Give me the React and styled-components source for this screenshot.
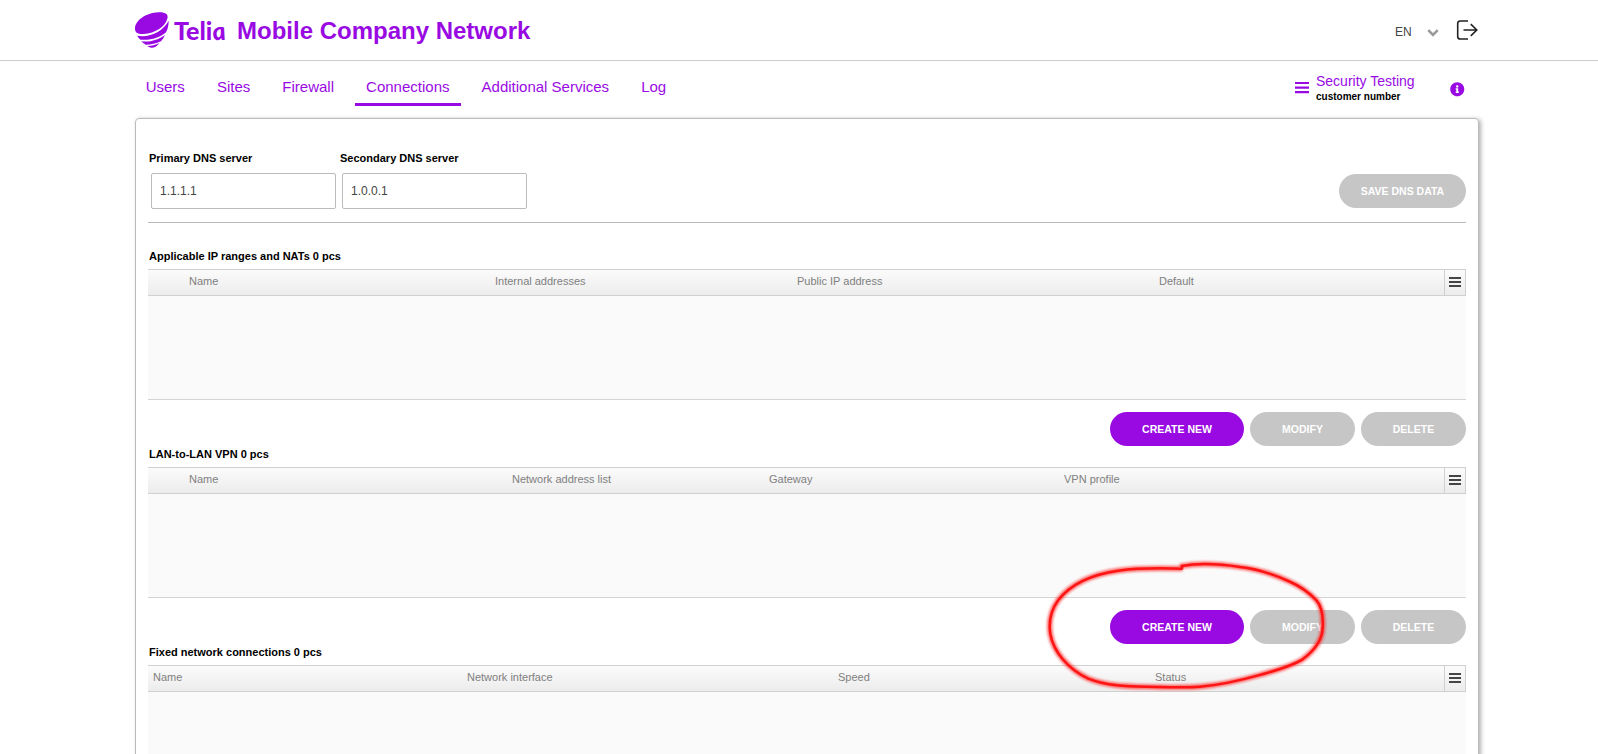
import React from "react";
import styled, { createGlobalStyle } from "styled-components";
import { FaInfoCircle } from "react-icons/fa";

const purple = "#990ae3";

const GlobalStyle = createGlobalStyle`
  *, *::before, *::after { box-sizing: border-box; }
  html, body { margin: 0; height: 100%; overflow: hidden; background: #fff; }
  body { font-family: "Liberation Sans", Arial, sans-serif; color: #000; }
`;

const Page = styled.div`
  position: relative;
  height: 754px;
  overflow: hidden;
  display: flex;
  flex-direction: column;
`;

const Header = styled.header`
  flex: none;
  height: 61px;
  padding: 0 120px 0 135px;
  border-bottom: 1px solid #ccc;
  display: flex;
  justify-content: space-between;
`;

const Brand = styled.div`
  display: flex;
  align-items: flex-start;
  color: ${purple};
`;

const Pebble = styled.svg`
  width: 34px;
  height: 36px;
  margin-top: 12px;
`;

const Wordmark = styled.span`
  margin: 14px 0 0 5px;
  width: 63px;
  font: 900 25px/32px Lato, sans-serif;
  white-space: nowrap;
`;

const RoundLetter = styled.span`
  display: inline-block;
  margin-left: -0.6px;
  font-style: italic;
  transform: skewX(10deg);
`;

const Title = styled.h1`
  margin: 15px 0 0;
  font-size: 24px;
  line-height: 32px;
  font-weight: bold;
`;

const Tools = styled.div`
  display: flex;
  align-items: flex-start;
`;

const Language = styled.span`
  margin-top: 24px;
  width: 32px;
  font-size: 12px;
  line-height: 16px;
  color: #444;
`;

const Chevron = styled.svg`
  width: 12px;
  height: 10px;
  margin: 28px 17px 0 0;
`;

const LogoutIcon = styled.svg`
  width: 22px;
  height: 22px;
  margin: 19px 0 0;
`;

const NavBar = styled.div`
  flex: none;
  height: 57px;
  padding: 12px 133.5px 0 134.5px;
  display: flex;
  justify-content: space-between;
  color: ${purple};
`;

const Tabs = styled.nav`
  display: flex;
  gap: 9.7px;
`;

const Tab = styled.a`
  height: 33px;
  padding: 4px 11.2px 0;
  font-size: 15px;
  line-height: 20px;
  border-bottom: 3px solid ${(p) => (p.$active ? purple : "transparent")};
`;

const Account = styled.div`
  display: flex;
  align-items: flex-start;
`;

const AccountMenu = styled.svg`
  width: 14px;
  height: 12px;
  margin: 9px 7px 0 0;
`;

const AccountText = styled.div`
  width: 134px;
  display: flex;
  flex-direction: column;
`;

const AccountName = styled.span`
  font-size: 14px;
  line-height: 16px;
  padding-bottom: 1px;
`;

const AccountSub = styled.span`
  font-size: 10px;
  line-height: 14px;
  font-weight: bold;
  color: #000;
`;

const InfoIcon = styled(FaInfoCircle)`
  width: 14.5px;
  height: 14.5px;
  margin-top: 9px;
`;

const Panel = styled.main`
  flex: none;
  width: 1344px;
  height: 700px;
  margin-left: 135px;
  padding: 0 12px;
  border: 1px solid #bbb;
  border-radius: 4px;
  box-shadow: 2px 1px 4px rgba(0, 0, 0, 0.3);
`;

const DnsForm = styled.form`
  height: 104px;
  padding-top: 30px;
  border-bottom: 1px solid #b9b9b9;
  display: flex;
  align-items: flex-start;
`;

const Field = styled.label`
  width: 191px;
  display: flex;
  flex-direction: column;
`;

const FieldLabel = styled.span`
  padding-left: 1px;
  font-size: 11px;
  line-height: 18px;
  font-weight: bold;
`;

const Input = styled.input`
  width: 185px;
  height: 36px;
  margin: 6px 0 0 3px;
  padding: 0 8px;
  border: 1px solid #bbb;
  border-radius: 2px;
  background: #fff;
  color: #444;
  font: 12px "Liberation Sans", Arial, sans-serif;
`;

const Button = styled.button`
  width: ${(p) => p.$width}px;
  height: 34px;
  padding: 0;
  border: 0;
  border-radius: 17px;
  background: ${(p) => (p.$primary ? purple : "#c6c6c6")};
  color: #fff;
  font: bold 10.5px "Liberation Sans", Arial, sans-serif;
`;

const SaveSlot = styled.div`
  margin: 25px 0 0 auto;
`;

const Section = styled.section`
  margin-top: ${(p) => (p.$first ? 25 : 0)}px;
`;

const SectionTitle = styled.h2`
  margin: 0;
  height: 21px;
  padding-left: 1px;
  font-size: 11px;
  line-height: 17px;
  font-weight: bold;
`;

const Table = styled.div`
  height: 131px;
  background: #fafafa;
  border-bottom: 1px solid #d4d4d4;
`;

const TableHead = styled.div`
  height: 27px;
  border: solid #d0d0d0;
  border-width: 1px 1px 1px 0;
  background: linear-gradient(#fbfbfb, #ececec);
  display: grid;
  grid-template-columns: ${(p) => p.$columns} 21px;
`;

const HeadCell = styled.span`
  font-size: 11px;
  line-height: 22px;
  color: #808080;
`;

const ColumnMenu = styled.span`
  grid-column: -2;
  border-left: 1px solid #d0d0d0;
  display: flex;
  flex-direction: column;
  align-items: center;
  padding-top: 7px;
  gap: 2px;
`;

const MenuBar = styled.i`
  width: 12px;
  height: 2px;
  background: #444;
`;

const Actions = styled.div`
  height: 46px;
  padding-top: 12px;
  display: flex;
  justify-content: flex-end;
  gap: 6px;
`;

const Marker = styled.svg`
  position: absolute;
  left: 1040px;
  top: 550px;
  width: 440px;
  height: 204px;
  pointer-events: none;
`;

const tabs = ["Users", "Sites", "Firewall", "Connections", "Additional Services", "Log"];

const sections = [
  {
    title: "Applicable IP ranges and NATs 0 pcs",
    grid: "41px 306px 302px 362px 1fr",
    editable: true,
    columns: ["Name", "Internal addresses", "Public IP address", "Default"],
  },
  {
    title: "LAN-to-LAN VPN 0 pcs",
    grid: "41px 323px 257px 295px 1fr",
    editable: true,
    columns: ["Name", "Network address list", "Gateway", "VPN profile"],
  },
  {
    title: "Fixed network connections 0 pcs",
    grid: "5px 314px 371px 317px 1fr",
    editable: false,
    columns: ["Name", "Network interface", "Speed", "Status"],
  },
];

const ringPath =
  "M428 56 C360 54 290 54 235 62 C150 74 90 105 55 150 C30 184 26 220 31 252 C40 305 85 358 145 386 C210 412 280 409 350 411 C400 412 440 413 480 410 C560 404 620 386 670 372 C720 358 760 345 788 328 C820 304 848 270 848 232 C850 200 845 170 830 152 C808 128 780 108 745 93 C700 73 650 56 600 51 C540 42 470 40 425 48 L428 56";

function ConnectionTable({ title, grid, columns, editable, first }) {
  return (
    <Section $first={first}>
      <SectionTitle>{title}</SectionTitle>
      <Table>
        <TableHead $columns={grid}>
          <span />
          {columns.map((c) => (
            <HeadCell key={c}>{c}</HeadCell>
          ))}
          <ColumnMenu>
            <MenuBar />
            <MenuBar />
            <MenuBar />
          </ColumnMenu>
        </TableHead>
      </Table>
      {editable && (
        <Actions>
          <Button $primary $width={134}>CREATE NEW</Button>
          <Button $width={105}>MODIFY</Button>
          <Button $width={105}>DELETE</Button>
        </Actions>
      )}
    </Section>
  );
}

export default function App() {
  return (
    <Page>
      <GlobalStyle />
      <Header>
        <Brand>
          <Pebble viewBox="0 0 102 108" fill={purple}>
            <path d="M0 50 C0 26 32 3 70 1 C92 0 101 7 97 20 C91 42 62 64 25 66 C8 67 0 61 0 50Z" />
            <path d="M7 71 C45 78 84 58 101 26 C101 40 98 52 93 61 C74 78 45 86 17 83 C13 80 9 76 7 71Z" />
            <path d="M19 88 C45 91 70 84 90 69 C86 78 82 83 78 88 C64 95 48 98 32 98 C27 95 22 92 19 88Z" />
            <path d="M37 102 C50 102 62 99 73 94 C60 110 48 110 37 102Z" />
          </Pebble>
          <Wordmark>
            Teli<RoundLetter>a</RoundLetter>
          </Wordmark>
          <Title>Mobile Company Network</Title>
        </Brand>
        <Tools>
          <Language>EN</Language>
          <Chevron viewBox="0 0 12 10" fill="none" stroke="#999" strokeWidth="2.6">
            <path d="M1.3 2.2 L6 7 L10.7 2.2" />
          </Chevron>
          <LogoutIcon viewBox="0 0 22 22" fill="none" stroke="#222" strokeWidth="1.6">
            <path d="M12 2 H4.3 Q1.7 2 1.7 4.6 V17.4 Q1.7 20 4.3 20 H12 M7.5 11 H20.8 M14.8 5.2 L20.8 11 L14.8 16.8" />
          </LogoutIcon>
        </Tools>
      </Header>
      <NavBar>
        <Tabs>
          {tabs.map((t) => (
            <Tab key={t} $active={t === "Connections"}>{t}</Tab>
          ))}
        </Tabs>
        <Account>
          <AccountMenu viewBox="0 0 14 12" fill={purple}>
            <path d="M0 0H14V2H0Z M0 4.5H14V6.8H0Z M0 9H14V11.2H0Z" />
          </AccountMenu>
          <AccountText>
            <AccountName>Security Testing</AccountName>
            <AccountSub>customer number</AccountSub>
          </AccountText>
          <InfoIcon />
        </Account>
      </NavBar>
      <Panel>
        <DnsForm>
          <Field>
            <FieldLabel>Primary DNS server</FieldLabel>
            <Input defaultValue="1.1.1.1" />
          </Field>
          <Field>
            <FieldLabel>Secondary DNS server</FieldLabel>
            <Input defaultValue="1.0.0.1" />
          </Field>
          <SaveSlot>
            <Button type="button" $width={127}>SAVE DNS DATA</Button>
          </SaveSlot>
        </DnsForm>
        {sections.map((s, i) => (
          <ConnectionTable key={s.title} {...s} first={i === 0} />
        ))}
      </Panel>
      <Marker viewBox="0 0 1320 612" fill="none" strokeLinejoin="round">
        <defs>
          <filter id="soft" x="-5%" y="-10%" width="110%" height="120%">
            <feGaussianBlur stdDeviation="2.5" />
          </filter>
        </defs>
        <path d={ringPath} stroke="#ff2a2a" strokeOpacity="0.65" strokeWidth="17" filter="url(#soft)" />
        <path d={ringPath} stroke="#ff1414" strokeWidth="7.5" />
      </Marker>
    </Page>
  );
}
